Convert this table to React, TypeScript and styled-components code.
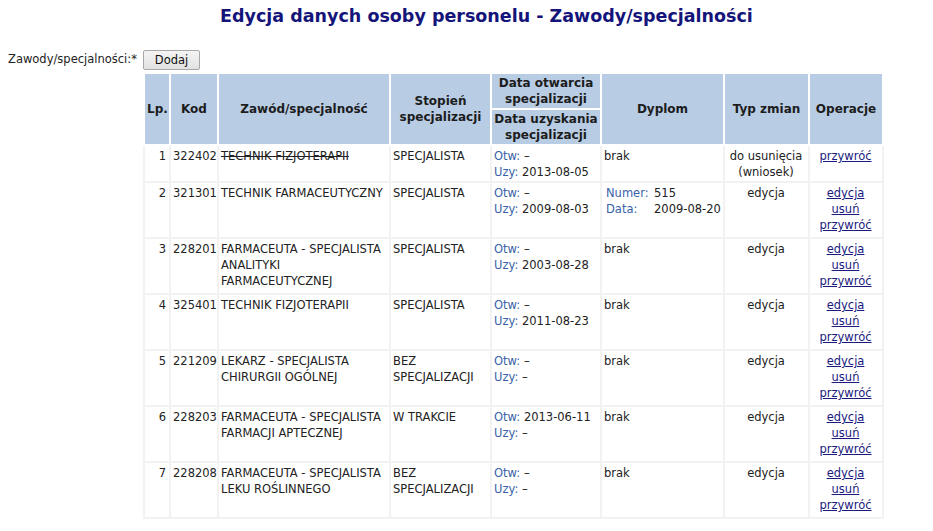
import React from "react";
import styled, { createGlobalStyle } from "styled-components";

const Global = createGlobalStyle`
  body {
    margin: 8px;
    background: #ffffff;
    font-family: "DejaVu Sans", Verdana, sans-serif;
    font-size: 11.5px;
    color: #222222;
  }
`;

const Title = styled.h1`
  margin: 0 0 25px 0;
  padding-left: 40px;
  text-align: center;
  font-size: 17.5px;
  font-weight: bold;
  color: #14147a;
  line-height: 17px;
`;

const FormGrid = styled.div`
  display: grid;
  grid-template-columns: 135px auto;
  align-items: start;
`;

const Label = styled.div`
  padding-top: 2px;
  font-size: 11.5px;
  white-space: nowrap;
`;

const Content = styled.div`
  display: flex;
  flex-direction: column;
  align-items: flex-start;
  gap: 2px;
`;

const Button = styled.button`
  font-family: "DejaVu Sans", Verdana, sans-serif;
  font-size: 11.5px;
  height: 20px;
  width: 57px;
  padding: 0;
  background: linear-gradient(#f4f4f4, #e2e2e2);
  border: 1px solid #a8a8a8;
  border-radius: 2px;
  color: #111;
`;

const Table = styled.table`
  border-collapse: collapse;
  table-layout: fixed;
  width: 739px;
  font-size: 11.5px;
`;

const Th = styled.th`
  background: #b8cce4;
  border: 2px solid #ffffff;
  font-size: 12px;
  font-weight: bold;
  line-height: 16px;
  padding: 1px 2px;
  text-align: center;
  vertical-align: middle;
  color: #1c1c1c;
`;

const Td = styled.td<{ $align?: string; $extra?: boolean }>`
  border: 2px solid #f2f2f2;
  padding: 2px 3px ${(p) => (p.$extra ? "4px" : "1px")} 2px;
  line-height: 16px;
  vertical-align: top;
  text-align: ${(p) => p.$align || "left"};
  white-space: normal;
`;

const Struck = styled.span`
  text-decoration: line-through;
`;

const Key = styled.span`
  color: #3a62a8;
`;

const Line = styled.div``;

const DyplomGrid = styled.div`
  display: grid;
  grid-template-columns: 48px auto;
  padding-left: 2px;
  white-space: nowrap;
`;

const Link = styled.a`
  display: block;
  color: #1a1a80;
  text-decoration: underline;
  cursor: pointer;
`;

type Row = {
  lp: number;
  kod: string;
  nazwa: string;
  struck?: boolean;
  stopien: string;
  otw: string;
  uzy: string;
  dyplom?: { numer: string; data: string };
  typ: string[];
  ops: string[];
};

const rows: Row[] = [
  { lp: 1, kod: "322402", nazwa: "TECHNIK FIZJOTERAPII", struck: true, stopien: "SPECJALISTA", otw: "–", uzy: "2013-08-05", typ: ["do usunięcia", "(wniosek)"], ops: ["przywróć"] },
  { lp: 2, kod: "321301", nazwa: "TECHNIK FARMACEUTYCZNY", stopien: "SPECJALISTA", otw: "–", uzy: "2009-08-03", dyplom: { numer: "515", data: "2009-08-20" }, typ: ["edycja"], ops: ["edycja", "usuń", "przywróć"] },
  { lp: 3, kod: "228201", nazwa: "FARMACEUTA - SPECJALISTA ANALITYKI FARMACEUTYCZNEJ", stopien: "SPECJALISTA", otw: "–", uzy: "2003-08-28", typ: ["edycja"], ops: ["edycja", "usuń", "przywróć"] },
  { lp: 4, kod: "325401", nazwa: "TECHNIK FIZJOTERAPII", stopien: "SPECJALISTA", otw: "–", uzy: "2011-08-23", typ: ["edycja"], ops: ["edycja", "usuń", "przywróć"] },
  { lp: 5, kod: "221209", nazwa: "LEKARZ - SPECJALISTA CHIRURGII OGÓLNEJ", stopien: "BEZ SPECJALIZACJI", otw: "–", uzy: "–", typ: ["edycja"], ops: ["edycja", "usuń", "przywróć"] },
  { lp: 6, kod: "228203", nazwa: "FARMACEUTA - SPECJALISTA FARMACJI APTECZNEJ", stopien: "W TRAKCIE", otw: "2013-06-11", uzy: "–", typ: ["edycja"], ops: ["edycja", "usuń", "przywróć"] },
  { lp: 7, kod: "228208", nazwa: "FARMACEUTA - SPECJALISTA LEKU ROŚLINNEGO", stopien: "BEZ SPECJALIZACJI", otw: "–", uzy: "–", typ: ["edycja"], ops: ["edycja", "usuń", "przywróć"] },
];

const widths = [26, 48, 172, 101, 110, 123, 85, 74];

export default function App() {
  return (
    <>
      <Global />
      <Title>Edycja danych osoby personelu - Zawody/specjalności</Title>
      <FormGrid>
        <Label>Zawody/specjalności:*</Label>
        <Content>
          <Button>Dodaj</Button>
          <Table>
            <colgroup>
              {widths.map((w, i) => (
                <col key={i} style={{ width: w }} />
              ))}
            </colgroup>
            <thead>
              <tr>
                <Th rowSpan={2}>Lp.</Th>
                <Th rowSpan={2}>Kod</Th>
                <Th rowSpan={2}>Zawód/specjalność</Th>
                <Th rowSpan={2}>Stopień specjalizacji</Th>
                <Th>Data otwarcia specjalizacji</Th>
                <Th rowSpan={2}>Dyplom</Th>
                <Th rowSpan={2}>Typ zmian</Th>
                <Th rowSpan={2}>Operacje</Th>
              </tr>
              <tr>
                <Th>Data uzyskania specjalizacji</Th>
              </tr>
            </thead>
            <tbody>
              {rows.map((r) => (
                <tr key={r.lp}>
                  <Td $align="right">{r.lp}</Td>
                  <Td>{r.kod}</Td>
                  <Td>{r.struck ? <Struck>{r.nazwa}</Struck> : r.nazwa}</Td>
                  <Td>{r.stopien}</Td>
                  <Td>
                    <Line>
                      <Key>Otw:</Key> {r.otw}
                    </Line>
                    <Line>
                      <Key>Uzy:</Key> {r.uzy}
                    </Line>
                  </Td>
                  <Td>
                    {r.dyplom ? (
                      <DyplomGrid>
                        <Key>Numer:</Key>
                        <span>{r.dyplom.numer}</span>
                        <Key>Data:</Key>
                        <span>{r.dyplom.data}</span>
                      </DyplomGrid>
                    ) : (
                      "brak"
                    )}
                  </Td>
                  <Td $align="center">
                    {r.typ.map((t) => (
                      <Line key={t}>{t}</Line>
                    ))}
                  </Td>
                  <Td $align="center" $extra={r.ops.length > 1}>
                    {r.ops.map((o) => (
                      <Link key={o}>{o}</Link>
                    ))}
                  </Td>
                </tr>
              ))}
            </tbody>
          </Table>
        </Content>
      </FormGrid>
    </>
  );
}
